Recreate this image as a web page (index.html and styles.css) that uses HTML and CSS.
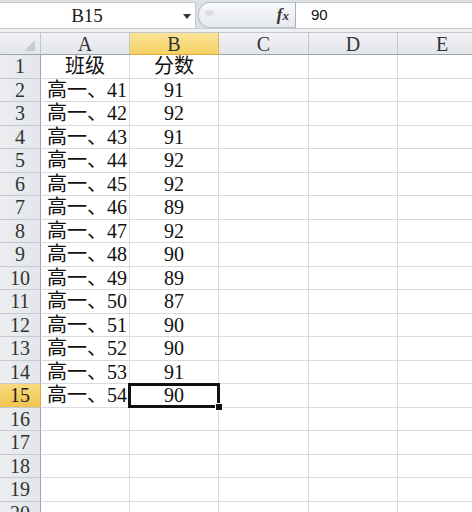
FILE: index.html
```html
<!DOCTYPE html>
<html lang="zh-CN">
<head>
<meta charset="utf-8">
<title>Excel</title>
<link rel="stylesheet" href="styles.css">
</head>
<body>
<div class="fbar">
  <div class="namebox"><span class="namebox-text">B15</span><span class="arrow"></span></div>
  <div class="fxzone"><span class="grip"></span><span class="fx"><i>f</i><i class="x">x</i></span></div>
  <div class="finput">90</div>
</div>
<div class="band"></div>
<div class="sheet">
  <div class="hd corner"><span class="tri"></span></div><div class="hd col">A</div><div class="hd col sel-h">B</div><div class="hd col">C</div><div class="hd col">D</div><div class="hd col">E</div>

  <div class="rh">1</div><div class="cell c">班级</div><div class="cell c">分数</div><div class="cell"></div><div class="cell"></div><div class="cell"></div>
  <div class="rh">2</div><div class="cell l">高一、41</div><div class="cell c">91</div><div class="cell"></div><div class="cell"></div><div class="cell"></div>
  <div class="rh">3</div><div class="cell l">高一、42</div><div class="cell c">92</div><div class="cell"></div><div class="cell"></div><div class="cell"></div>
  <div class="rh">4</div><div class="cell l">高一、43</div><div class="cell c">91</div><div class="cell"></div><div class="cell"></div><div class="cell"></div>
  <div class="rh">5</div><div class="cell l">高一、44</div><div class="cell c">92</div><div class="cell"></div><div class="cell"></div><div class="cell"></div>
  <div class="rh">6</div><div class="cell l">高一、45</div><div class="cell c">92</div><div class="cell"></div><div class="cell"></div><div class="cell"></div>
  <div class="rh">7</div><div class="cell l">高一、46</div><div class="cell c">89</div><div class="cell"></div><div class="cell"></div><div class="cell"></div>
  <div class="rh">8</div><div class="cell l">高一、47</div><div class="cell c">92</div><div class="cell"></div><div class="cell"></div><div class="cell"></div>
  <div class="rh">9</div><div class="cell l">高一、48</div><div class="cell c">90</div><div class="cell"></div><div class="cell"></div><div class="cell"></div>
  <div class="rh">10</div><div class="cell l">高一、49</div><div class="cell c">89</div><div class="cell"></div><div class="cell"></div><div class="cell"></div>
  <div class="rh">11</div><div class="cell l">高一、50</div><div class="cell c">87</div><div class="cell"></div><div class="cell"></div><div class="cell"></div>
  <div class="rh">12</div><div class="cell l">高一、51</div><div class="cell c">90</div><div class="cell"></div><div class="cell"></div><div class="cell"></div>
  <div class="rh">13</div><div class="cell l">高一、52</div><div class="cell c">90</div><div class="cell"></div><div class="cell"></div><div class="cell"></div>
  <div class="rh">14</div><div class="cell l">高一、53</div><div class="cell c">91</div><div class="cell"></div><div class="cell"></div><div class="cell"></div>
  <div class="rh sel-h">15</div><div class="cell l">高一、54</div><div class="cell c active">90<span class="selbox"><span class="handle"></span></span></div><div class="cell"></div><div class="cell"></div><div class="cell"></div>
  <div class="rh">16</div><div class="cell"></div><div class="cell"></div><div class="cell"></div><div class="cell"></div><div class="cell"></div>
  <div class="rh">17</div><div class="cell"></div><div class="cell"></div><div class="cell"></div><div class="cell"></div><div class="cell"></div>
  <div class="rh">18</div><div class="cell"></div><div class="cell"></div><div class="cell"></div><div class="cell"></div><div class="cell"></div>
  <div class="rh">19</div><div class="cell"></div><div class="cell"></div><div class="cell"></div><div class="cell"></div><div class="cell"></div>
  <div class="rh">20</div><div class="cell"></div><div class="cell"></div><div class="cell"></div><div class="cell"></div><div class="cell"></div>
</div>
</body>
</html>
```
FILE: styles.css
```css
html, body {
  margin: 0;
  padding: 0;
}
body {
  width: 472px;
  height: 512px;
  overflow: hidden;
  background: #fff;
  font-family: "Liberation Serif", "Noto Sans CJK SC", serif;
  color: #111;
}

/* formula bar */
.fbar {
  display: flex;
  height: 28px;
  box-sizing: border-box;
  padding-top: 2px;
  background: #dde1e6;
}
.namebox {
  width: 196px;
  box-sizing: border-box;
  background: #fff;
  border-top: 1px solid #c5cad1;
  border-right: 1px solid #c5cad1;
  display: flex;
  align-items: center;
}
.namebox-text {
  width: 174px;
  text-align: center;
  font-size: 19px;
  line-height: 24px;
  color: #1a1a1a;
}
.arrow {
  width: 0;
  height: 0;
  margin-left: 9px;
  margin-top: 1px;
  border-left: 4px solid transparent;
  border-right: 4px solid transparent;
  border-top: 5px solid #333;
}
.fxzone {
  width: 97px;
  margin-left: 2px;
  box-sizing: border-box;
  border: 1px solid #b8bec6;
  border-right: none;
  border-radius: 12px 0 0 12px;
  background: linear-gradient(#f7f8f9, #e6e9ed);
  display: flex;
  align-items: center;
  justify-content: space-between;
  padding: 0 6px 0 6px;
}
.grip {
  width: 9px;
  height: 6px;
  border-radius: 50%;
  background: #dcdfe3;
  margin-top: -4px;
}
.fx {
  font-family: "Liberation Serif", serif;
  font-weight: bold;
  font-size: 17px;
  color: #333;
  line-height: 20px;
}
.fx .x {
  font-size: 13px;
  margin-left: 0;
}
.finput {
  flex: 1;
  background: #fff;
  border-top: 1px solid #c5cad1;
  border-left: 1px solid #aab0b8;
  padding-left: 15px;
  font-family: "Liberation Sans", Arial, sans-serif;
  font-size: 15px;
  line-height: 24px;
  color: #111;
}
.band {
  height: 4px;
  background: #eef0f2;
  border-top: 1px solid #c8ccd2;
  border-bottom: 1px solid #c3c7cd;
  box-sizing: border-box;
  height: 5px;
}

/* sheet */
.sheet {
  display: grid;
  grid-template-columns: 41px 89px 89px 90px 89px 89px;
  grid-template-rows: 22px;
  grid-auto-rows: 23.5px;
}
.hd {
  box-sizing: border-box;
  background: linear-gradient(#f1f2f4, #e3e6ea);
  border-right: 1px solid #c3c7cc;
  border-bottom: 1px solid #9ea4ab;
  font-size: 20px;
  line-height: 22px;
  text-align: center;
  color: #333;
}
.hd.sel-h {
  background: linear-gradient(#fbe49a, #f6d264);
  border-bottom-color: #e2a93c;
  border-right-color: #d9b25c;
}
.corner {
  display: flex;
  justify-content: flex-end;
  align-items: flex-end;
  padding: 0 5px 3px 0;
}
.tri {
  width: 0;
  height: 0;
  border-left: 11px solid transparent;
  border-bottom: 11px solid #c9ccd0;
}
.rh {
  box-sizing: border-box;
  background: linear-gradient(90deg, #eceef1, #e3e6ea);
  border-right: 1px solid #9ea4ab;
  border-bottom: 1px solid #c6cace;
  font-size: 20px;
  line-height: 23px;
  text-align: center;
  color: #333;
}
.rh.sel-h {
  background: linear-gradient(#f8dc80, #f2c24e);
  border-right-color: #e2a93c;
  color: #222;
}
.cell {
  box-sizing: border-box;
  border-right: 1px solid #d9dadb;
  border-bottom: 1px solid #d9dadb;
  font-size: 20px;
  line-height: 23px;
  white-space: nowrap;
  color: #111;
}
.cell.l {
  padding-left: 6px;
  overflow: visible;
}
.cell.c {
  text-align: center;
}
.active {
  position: relative;
}
.selbox {
  position: absolute;
  left: -2px;
  top: -1px;
  right: -2px;
  bottom: -1px;
  border: 3px solid #111;
}
.handle {
  position: absolute;
  right: -6px;
  bottom: -6px;
  width: 6px;
  height: 6px;
  background: #111;
  border: 1px solid #fff;
}
```
